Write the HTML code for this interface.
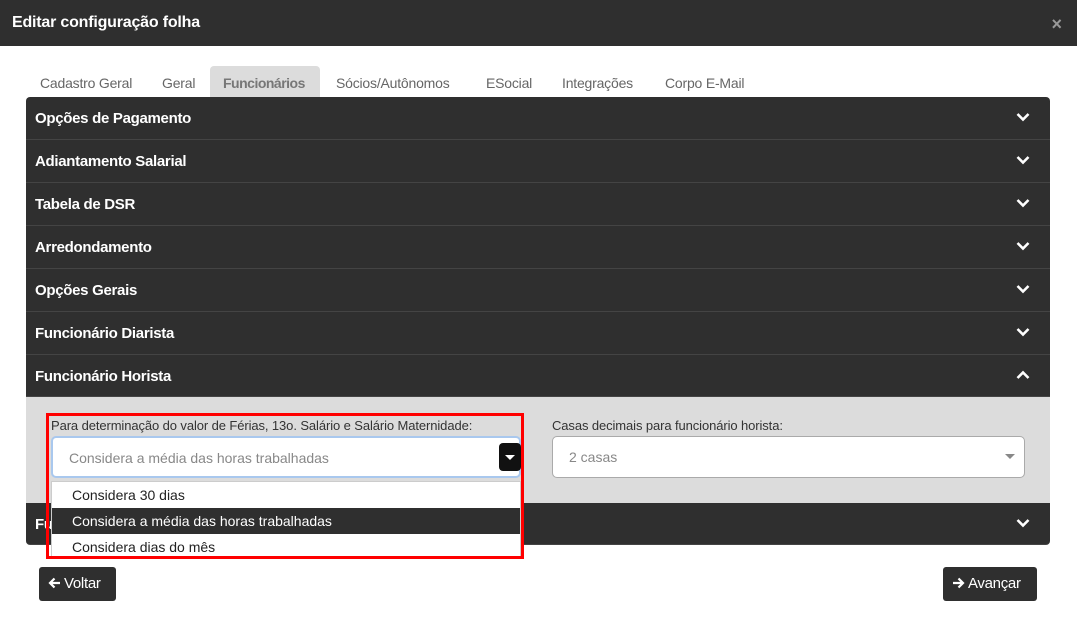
<!DOCTYPE html>
<html><head><meta charset="utf-8"><style>
*{box-sizing:border-box;margin:0;padding:0}
body{width:1077px;height:631px;background:#fff;font-family:"Liberation Sans",Arial,sans-serif;position:relative;overflow:hidden}
.hdr{position:absolute;left:0;top:0;width:1077px;height:46px;background:#2f2f2f;color:#fff;font-weight:bold;font-size:16px;padding:14px 12px;letter-spacing:-0.2px}
.x{position:absolute;right:15px;top:14px;color:#999;font-size:18px;font-weight:bold}
.tab{position:absolute;top:66px;height:31px;font-size:14px;color:#666;padding-top:9px;letter-spacing:-0.2px}
.tab.a{background:#dcdcdc;color:#777;font-weight:bold;border-radius:4px 4px 0 0;padding-left:13px;width:110px;letter-spacing:-0.5px}
.row{position:absolute;left:26px;width:1024px;height:43px;background:#2f2f2f;color:#fff;font-weight:bold;font-size:15px;padding:13px 9px;border-bottom:1px solid #444;letter-spacing:-0.3px}
.chev{position:absolute;right:20px;top:15px}
.body{position:absolute;left:26px;top:397px;width:1024px;height:106px;background:#dcdcdc}
.lbl{position:absolute;font-size:13px;color:#333;letter-spacing:-0.1px}
.sel{position:absolute;background:#fff;border:1px solid #aaa;border-radius:5px;font-size:14px;color:#888;padding:12px 16px}
.btn{position:absolute;top:567px;height:34px;background:#2f2f2f;color:#fff;border-radius:3px;font-size:15px;padding:8px 9px;white-space:nowrap;letter-spacing:-0.3px}
.btn svg{vertical-align:-1px;margin-right:3px}
.dd{position:absolute;left:51px;top:481px;width:470px;height:76px;background:#fff;border:1px solid #ccc;font-size:14px;color:#222}
.dd div{height:26px;padding:5px 20px}
.dd .h{background:#2f2f2f;color:#fff}
</style></head><body>
<div class="hdr">Editar configuração folha</div><div class="x">×</div>
<div class="tab" style="left:40px">Cadastro Geral</div>
<div class="tab" style="left:162px">Geral</div>
<div class="tab a" style="left:210px">Funcionários</div>
<div class="tab" style="left:336px">Sócios/Autônomos</div>
<div class="tab" style="left:486px">ESocial</div>
<div class="tab" style="left:562px">Integrações</div>
<div class="tab" style="left:665px">Corpo E-Mail</div>

<div class="row" style="top:97px;border-radius:4px 4px 0 0">Opções de Pagamento<svg class="chev" width="14" height="10" viewBox="0 0 14 10"><path d="M1.5 2l5.5 5.5 5.5-5.5" stroke="#fff" stroke-width="2.6" fill="none"/></svg></div>
<div class="row" style="top:140px">Adiantamento Salarial<svg class="chev" width="14" height="10" viewBox="0 0 14 10"><path d="M1.5 2l5.5 5.5 5.5-5.5" stroke="#fff" stroke-width="2.6" fill="none"/></svg></div>
<div class="row" style="top:183px">Tabela de DSR<svg class="chev" width="14" height="10" viewBox="0 0 14 10"><path d="M1.5 2l5.5 5.5 5.5-5.5" stroke="#fff" stroke-width="2.6" fill="none"/></svg></div>
<div class="row" style="top:226px">Arredondamento<svg class="chev" width="14" height="10" viewBox="0 0 14 10"><path d="M1.5 2l5.5 5.5 5.5-5.5" stroke="#fff" stroke-width="2.6" fill="none"/></svg></div>
<div class="row" style="top:269px">Opções Gerais<svg class="chev" width="14" height="10" viewBox="0 0 14 10"><path d="M1.5 2l5.5 5.5 5.5-5.5" stroke="#fff" stroke-width="2.6" fill="none"/></svg></div>
<div class="row" style="top:312px">Funcionário Diarista<svg class="chev" width="14" height="10" viewBox="0 0 14 10"><path d="M1.5 2l5.5 5.5 5.5-5.5" stroke="#fff" stroke-width="2.6" fill="none"/></svg></div>
<div class="row" style="top:355px;height:42px">Funcionário Horista<svg class="chev" width="14" height="10" viewBox="0 0 14 10"><path d="M1.5 8l5.5-5.5 5.5 5.5" stroke="#fff" stroke-width="2.6" fill="none"/></svg></div>
<div class="body"></div>
<div class="row" style="top:503px;height:42px;border-radius:0 0 4px 4px">Fu<svg class="chev" width="14" height="10" viewBox="0 0 14 10"><path d="M1.5 2l5.5 5.5 5.5-5.5" stroke="#fff" stroke-width="2.6" fill="none"/></svg></div>

<div class="lbl" style="left:51px;top:418px">Para determinação do valor de Férias, 13o. Salário e Salário Maternidade:</div>
<div class="sel" style="left:51px;top:436px;width:470px;height:42px;border:2px solid #a9c8ee">Considera a média das horas trabalhadas</div>
<div style="position:absolute;left:499px;top:443px;width:22px;height:28px;background:#111;border-radius:4px"><svg width="22" height="28"><path d="M6 12h10l-5 5z" fill="#fff"/></svg></div>
<div class="lbl" style="left:552px;top:418px">Casas decimais para funcionário horista:</div>
<div class="sel" style="left:552px;top:436px;width:473px;height:42px">2 casas</div>
<svg style="position:absolute;left:1005px;top:454px" width="10" height="6"><path d="M0 0h10L5 5z" fill="#888"/></svg>
<div class="dd"><div>Considera 30 dias</div><div class="h">Considera a média das horas trabalhadas</div><div>Considera dias do mês</div></div>
<div style="position:absolute;left:46px;top:413px;width:478px;height:146px;border:3px solid #f00"></div>

<div class="btn" style="left:39px;width:77px"><svg width="13" height="12" viewBox="0 0 13 12"><path d="M12 6H2M6.5 1.5L2 6l4.5 4.5" stroke="#fff" stroke-width="2.2" fill="none"/></svg>Voltar</div>
<div class="btn" style="left:943px;width:94px"><svg width="13" height="12" viewBox="0 0 13 12"><path d="M1 6h10M6.5 1.5L11 6l-4.5 4.5" stroke="#fff" stroke-width="2.2" fill="none"/></svg>Avançar</div>
</body></html>
